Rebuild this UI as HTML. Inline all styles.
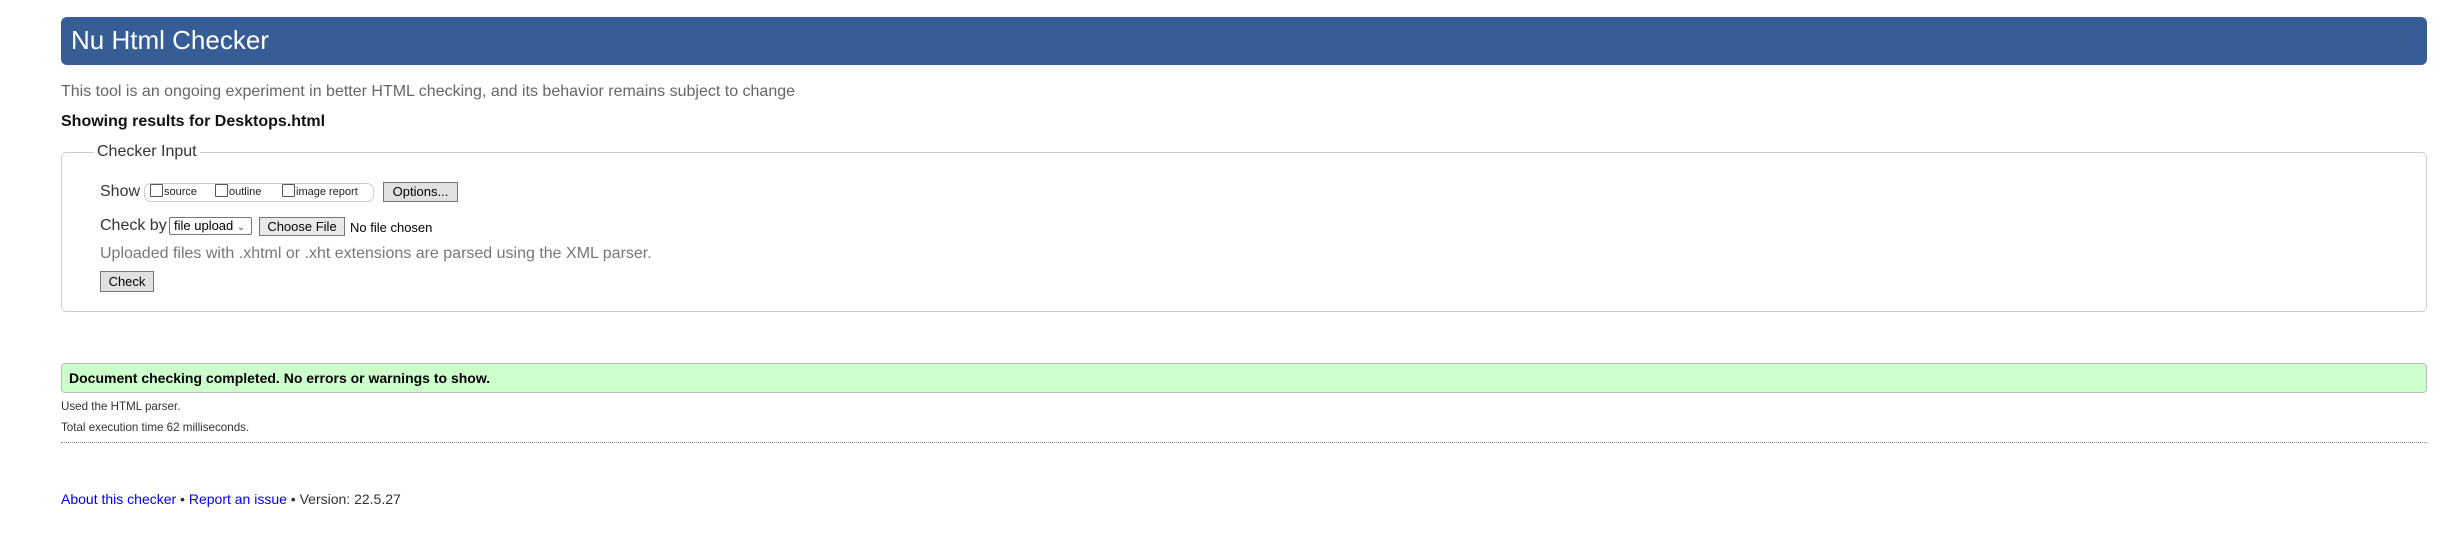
<!DOCTYPE html>
<html><head><meta charset="utf-8"><style>
html,body{margin:0;padding:0;background:#fff;width:2440px;height:539px;overflow:hidden}
#w{position:absolute;left:0;top:0;width:2440px;height:539px;font-family:"Liberation Sans",Arial,sans-serif}
#w div,#w span{position:absolute;white-space:nowrap}
.t{line-height:1}
.btn{background:#e1e1e1;border:1px solid #777;box-sizing:border-box;font-size:13px;color:#000;text-align:center}
.cb{width:13px;height:13px;border:1px solid #555;box-sizing:border-box;border-radius:1px;background:#fff}
a{color:#00e}
</style></head><body><div id="w">
<div style="left:61px;top:17px;width:2366px;height:48px;background:#365d95;border-radius:6px"></div>
<div class="t" style="left:71px;top:27px;font-size:26px;color:#fff">Nu Html Checker</div>
<div class="t" style="left:61px;top:83.5px;font-size:16px;color:#666">This tool is an ongoing experiment in better HTML checking, and its behavior remains subject to change</div>
<div class="t" style="left:61px;top:113.5px;font-size:16px;font-weight:bold;color:#111">Showing results for Desktops.html</div>
<div style="left:61px;top:152px;width:2366px;height:160px;border:1px solid #ccc;box-sizing:border-box;border-radius:5px"></div>
<div class="t" style="left:94px;top:143.5px;font-size:16px;color:#333;background:#fff;padding:0 3px">Checker Input</div>
<div class="t" style="left:100px;top:183.5px;font-size:16px;color:#333">Show</div>
<div style="left:144px;top:183px;width:230px;height:19px;border:1px solid #ccc;box-sizing:border-box;border-radius:7px"></div>
<div class="cb" style="left:150px;top:184px"></div>
<div class="t" style="left:164px;top:187px;font-size:11px;color:#222">source</div>
<div class="cb" style="left:215px;top:184px"></div>
<div class="t" style="left:229px;top:187px;font-size:11px;color:#222">outline</div>
<div class="cb" style="left:282px;top:184px"></div>
<div class="t" style="left:296px;top:187px;font-size:11px;color:#222">image report</div>
<div class="btn" style="left:383px;top:182px;width:75px;height:20px;line-height:18px">Options...</div>
<div class="t" style="left:100px;top:217.5px;font-size:16px;color:#333">Check by</div>
<div style="left:169px;top:217px;width:83px;height:18px;border:1px solid #767676;box-sizing:border-box;border-radius:2px;font-size:13px;line-height:16px;padding-left:4px;color:#000">file upload <span style="position:static;font-size:10px;color:#555">&#8964;</span></div>
<div class="btn" style="left:259px;top:217px;width:86px;height:19px;line-height:17px;background:#e9e9e9">Choose File</div>
<div class="t" style="left:350px;top:220.5px;font-size:13px;color:#000">No file chosen</div>
<div class="t" style="left:100px;top:245.5px;font-size:16px;color:#777">Uploaded files with .xhtml or .xht extensions are parsed using the XML parser.</div>
<div class="btn" style="left:100px;top:271px;width:54px;height:21px;line-height:19px">Check</div>
<div style="left:61px;top:363px;width:2366px;height:30px;background:#ccffcc;border:1px solid #bbb;box-sizing:border-box;border-radius:4px"></div>
<div class="t" style="left:69px;top:371px;font-size:14px;font-weight:bold;color:#000">Document checking completed. No errors or warnings to show.</div>
<div class="t" style="left:61px;top:401px;font-size:11.6px;color:#333">Used the HTML parser.</div>
<div class="t" style="left:61px;top:422px;font-size:11.6px;color:#333">Total execution time 62 milliseconds.</div>
<div style="left:61px;top:442px;width:2366px;height:0;border-top:1px dotted #888"></div>
<div class="t" style="left:61px;top:492px;font-size:14px;color:#333"><a>About this checker</a> • <a>Report an issue</a> • Version: 22.5.27</div>
</div></body></html>
